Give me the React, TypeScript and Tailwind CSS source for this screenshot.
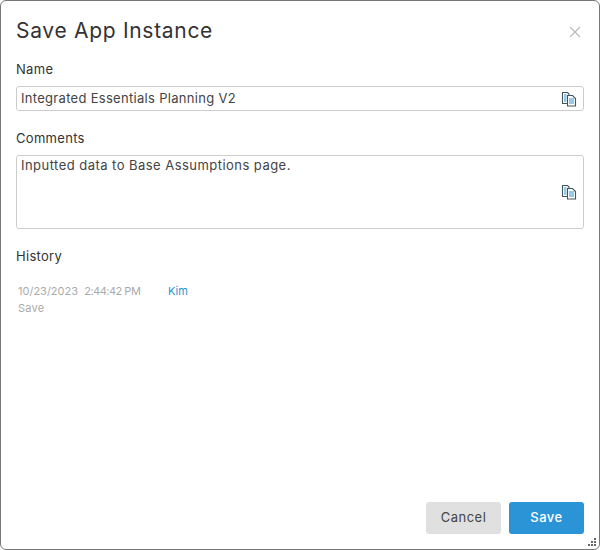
const font = { fontFamily: "Inter, 'Noto Sans', sans-serif" };

function CopyIcon() {
  return (
    <svg width="16" height="16" viewBox="0 0 16 16" fill="none" className="shrink-0">
      <path d="M6 12.5H1.5V1.5H6.5L8 3V4.5" stroke="#44545c" strokeWidth="1.1" />
      <path d="M6.5 4.5H11.5L14.5 7.5V15H6.5Z" fill="#fff" stroke="#44545c" strokeWidth="1.1" />
      <path d="M3 4H5.5M3 6H5.5M3 8H5.5M3 10H5.5" stroke="#2a94d6" strokeWidth="1" />
      <path d="M8 8H13M8 10H13M8 12H13" stroke="#2a94d6" strokeWidth="1" />
    </svg>
  );
}

function Label({ children }: { children: string }) {
  return <div className="text-[13px] leading-[18px] tracking-[0.3px] text-[#333]">{children}</div>;
}

export default function App() {
  return (
    <div style={font} className="relative flex h-[550px] w-[600px] flex-col overflow-hidden rounded-[6px] border border-[#777] bg-white px-[15px]">
      <div className="flex items-center justify-between pt-[16px]">
        <h1 className="text-[21px] leading-[28px] font-normal tracking-[0.7px] text-[#333]">Save App Instance</h1>
        <svg width="12" height="12" viewBox="0 0 12 12" className="mr-[3px] mt-[1px]">
          <path d="M1 1L11 11M11 1L1 11" stroke="#bbb" strokeWidth="1.2" />
        </svg>
      </div>

      <div className="mt-[15px]">
        <Label>Name</Label>
      </div>
      <div className="mt-[8px] flex h-[25px] items-center justify-between rounded-[3px] border border-[#ccc] pl-[4px] pr-[6px]">
        <span className="text-[13px] tracking-[0.3px] text-[#444]">Integrated Essentials Planning V2</span>
        <CopyIcon />
      </div>

      <div className="mt-[18px]">
        <Label>Comments</Label>
      </div>
      <div className="mt-[8px] flex h-[74px] items-start justify-between rounded-[3px] border border-[#ccc] pl-[4px] pr-[6px]">
        <span className="text-[13px] leading-[18px] tracking-[0.46px] text-[#444]">Inputted data to Base Assumptions page.</span>
        <div className="mt-[28px]">
          <CopyIcon />
        </div>
      </div>

      <div className="mt-[18px]">
        <Label>History</Label>
      </div>
      <div className="mt-[18px] pl-[2px] text-[11px] leading-[17px] text-[#aaa]">
        <div className="flex">
          <span className="w-[150px] whitespace-pre">10/23/2023  <span className="tracking-[-0.5px]">2:44:42 PM</span></span>
          <span className="text-[#2a94d6]">Kim</span>
        </div>
        <div className="tracking-[0.2px]">Save</div>
      </div>

      <div className="mt-auto flex justify-end gap-[8px] pb-[15px]">
        <button className="h-[32px] w-[75px] rounded-[3px] bg-[#e0e0e0] text-[13px] tracking-[0.5px] text-[#444]">Cancel</button>
        <button className="h-[32px] w-[75px] rounded-[3px] bg-[#2a94d6] text-[13px] font-medium tracking-[0.5px] text-white">Save</button>
      </div>

      <svg width="9" height="9" viewBox="0 0 9 9" className="absolute right-[2px] bottom-[2px]">
        <path d="M6 0H8V2H6ZM3 3H5V5H3ZM6 3H8V5H6ZM0 6H2V8H0ZM3 6H5V8H3ZM6 6H8V8H6Z" fill="#666" />
      </svg>
    </div>
  );
}
